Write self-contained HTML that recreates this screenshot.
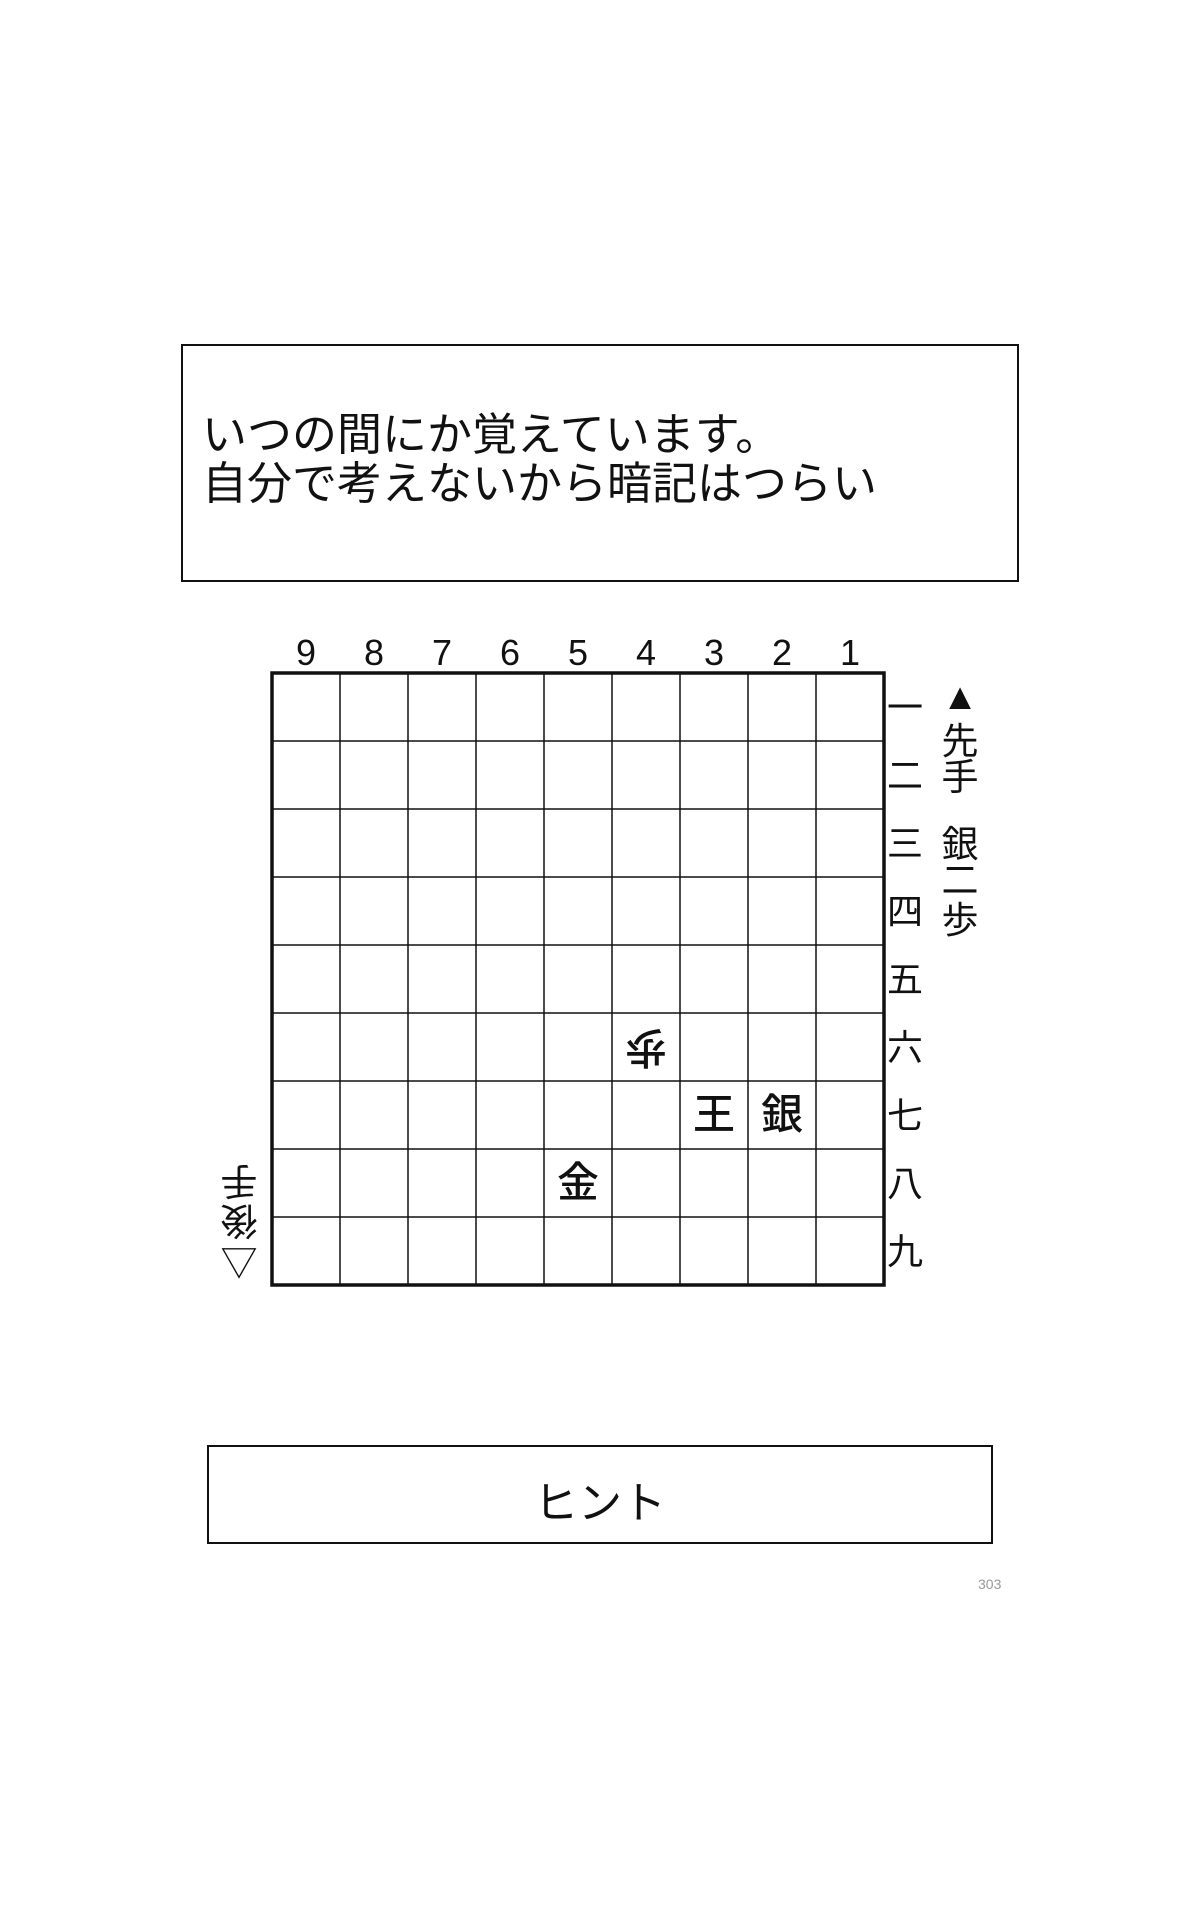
<!DOCTYPE html>
<html><head><meta charset="utf-8"><style>
body{margin:0;width:1200px;height:1920px;background:#fff;position:relative;overflow:hidden;font-family:"Liberation Sans","Noto Sans CJK JP",sans-serif;color:#111}
.a{position:absolute}
.box{border:2px solid #111;box-sizing:border-box}
.t{font-size:45px;line-height:50px;white-space:nowrap}
.num{font-size:36px;width:68px;text-align:center;top:632px;line-height:42px}
.rk{font-size:36px;left:886px;width:38px;text-align:center;line-height:40px}
.pc{font-size:42px;width:68px;height:68px;line-height:68px;text-align:center;font-weight:500}
.v{font-size:37px;left:940px;width:40px;text-align:center;line-height:40px}
</style></head><body>
<div class="a box" style="left:181px;top:344px;width:838px;height:238px"></div>
<div class="a t" style="left:202px;top:410px">いつの間にか覚えています。</div>
<div class="a t" style="left:202px;top:459px">自分で考えないから暗記はつらい</div>

<svg class="a" style="left:0;top:0" width="1200" height="1920">
<g stroke="#111" stroke-width="1.5">
<line x1="340" y1="673" x2="340" y2="1285"/><line x1="408" y1="673" x2="408" y2="1285"/>
<line x1="476" y1="673" x2="476" y2="1285"/><line x1="544" y1="673" x2="544" y2="1285"/>
<line x1="612" y1="673" x2="612" y2="1285"/><line x1="680" y1="673" x2="680" y2="1285"/>
<line x1="748" y1="673" x2="748" y2="1285"/><line x1="816" y1="673" x2="816" y2="1285"/>
<line y1="741" x1="272" y2="741" x2="884"/><line y1="809" x1="272" y2="809" x2="884"/>
<line y1="877" x1="272" y2="877" x2="884"/><line y1="945" x1="272" y2="945" x2="884"/>
<line y1="1013" x1="272" y2="1013" x2="884"/><line y1="1081" x1="272" y2="1081" x2="884"/>
<line y1="1149" x1="272" y2="1149" x2="884"/><line y1="1217" x1="272" y2="1217" x2="884"/>
</g>
<rect x="272" y="673" width="612" height="612" fill="none" stroke="#111" stroke-width="3.5"/>
</svg>

<div class="a num" style="left:272px">9</div><div class="a num" style="left:340px">8</div><div class="a num" style="left:408px">7</div>
<div class="a num" style="left:476px">6</div><div class="a num" style="left:544px">5</div><div class="a num" style="left:612px">4</div>
<div class="a num" style="left:680px">3</div><div class="a num" style="left:748px">2</div><div class="a num" style="left:816px">1</div>

<div class="a rk" style="top:688px">一</div><div class="a rk" style="top:756px">二</div><div class="a rk" style="top:824px">三</div>
<div class="a rk" style="top:892px">四</div><div class="a rk" style="top:960px">五</div><div class="a rk" style="top:1028px">六</div>
<div class="a rk" style="top:1096px">七</div><div class="a rk" style="top:1164px">八</div><div class="a rk" style="top:1232px">九</div>

<div class="a v" style="top:677px">▲</div>
<div class="a v" style="top:722px">先</div>
<div class="a v" style="top:758px">手</div>
<div class="a v" style="top:825px">銀</div>
<div class="a v" style="top:861px">二</div>
<div class="a v" style="top:901px">歩</div>

<div class="a" style="left:219px;top:1160px;width:40px;font-size:37px;line-height:40px;text-align:center;transform:rotate(180deg)">△<br>後<br>手</div>

<div class="a pc" style="left:612px;top:1013px;transform:rotate(180deg)">歩</div>
<div class="a pc" style="left:680px;top:1081px">王</div>
<div class="a pc" style="left:748px;top:1081px">銀</div>
<div class="a pc" style="left:544px;top:1149px">金</div>

<div class="a box" style="left:207px;top:1445px;width:786px;height:99px"></div>
<div class="a" style="left:207px;top:1478px;width:786px;text-align:center;font-size:44px;line-height:52px">ヒント</div>
<div class="a" style="left:978px;top:1576px;font-size:14px;color:#999">303</div>
</body></html>
